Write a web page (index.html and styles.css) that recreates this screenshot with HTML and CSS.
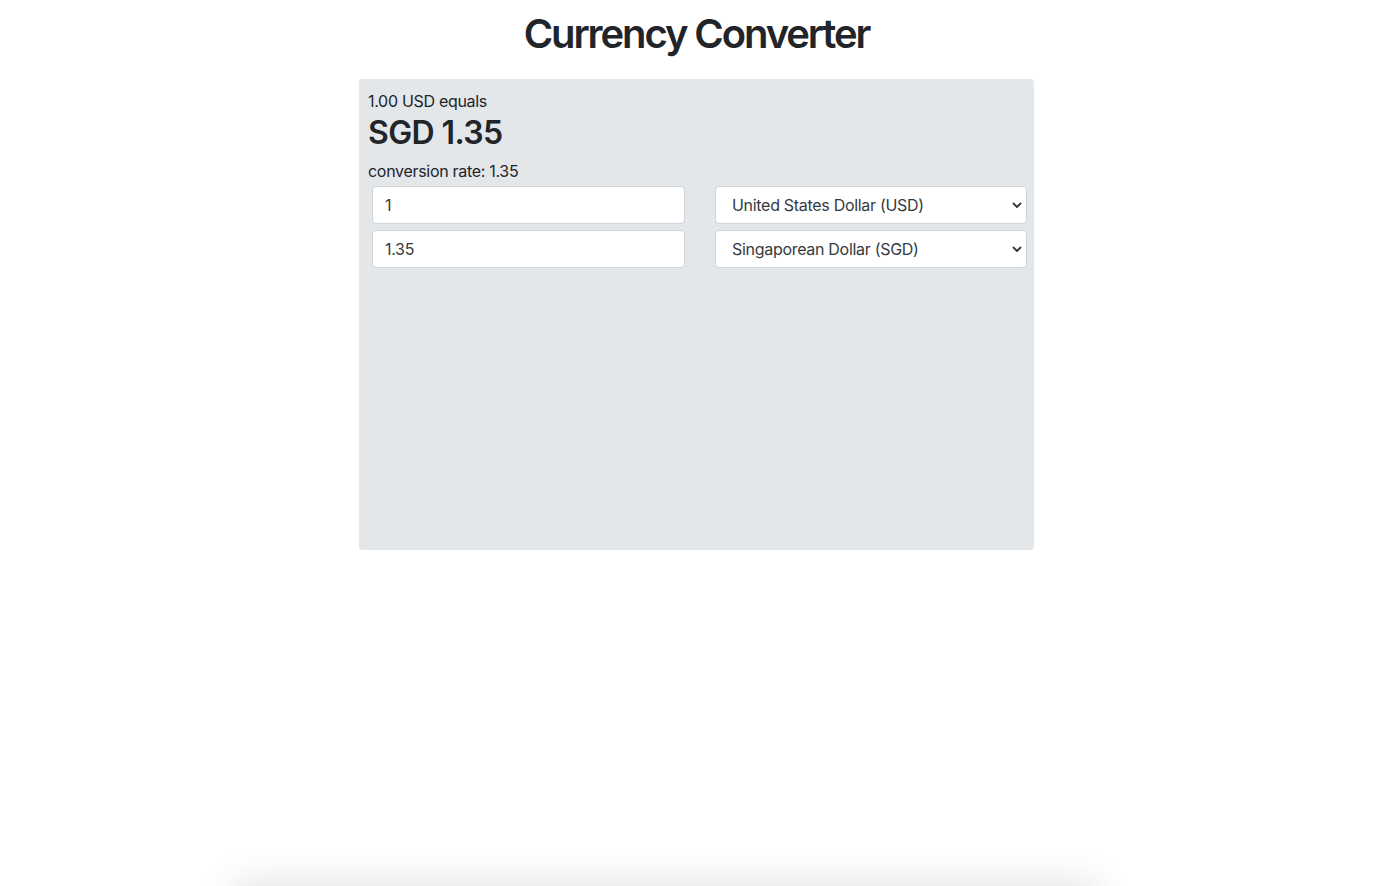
FILE: index.html
```html
<!DOCTYPE html>
<html lang="en">
<head>
<meta charset="utf-8">
<title>Currency Converter</title>
<link rel="stylesheet" href="styles.css">
</head>
<body>
<main class="page">
  <h1 class="title">Currency Converter</h1>
  <section class="panel">
    <div class="summary">
      <p class="equals">1.00 USD equals</p>
      <h2 class="result">SGD 1.35</h2>
      <p class="rate">conversion rate: 1.35</p>
    </div>
    <form class="grid">
      <input class="field" type="text" value="1">
      <select class="field select">
        <option>United States Dollar (USD)</option>
      </select>
      <input class="field" type="text" value="1.35">
      <select class="field select">
        <option>Singaporean Dollar (SGD)</option>
      </select>
    </form>
  </section>
</main>
<div class="dock"></div>
</body>
</html>
```

FILE: styles.css
```css
html, body {
  margin: 0;
  padding: 0;
  background: #fff;
}
body {
  font-family: Inter, "Liberation Sans", sans-serif;
  color: #212529;
  overflow: hidden;
  height: 886px;
}
.page {
  display: flex;
  flex-direction: column;
  align-items: center;
  padding: 10px 5px 0 0;
}
.title {
  margin: 0 0 21px;
  font-size: 40px;
  line-height: 48px;
  font-weight: 600;
  letter-spacing: -2.1px;
}
.panel {
  box-sizing: border-box;
  width: 675px;
  height: 471px;
  background: #e4e7ea;
  border-radius: 4px;
  padding-top: 10px;
}
.summary {
  padding-left: 9px;
  letter-spacing: -0.3px;
}
.equals {
  margin: 0;
  font-size: 16px;
  line-height: 24px;
}
.result {
  margin: 1px 0 0;
  font-size: 32px;
  line-height: 38px;
  font-weight: 600;
  letter-spacing: -0.6px;
}
.rate {
  margin: 7px 0 0;
  font-size: 16px;
  line-height: 24px;
}
.grid {
  display: grid;
  grid-template-columns: 313px 312px;
  column-gap: 30px;
  row-gap: 6px;
  padding: 3px 0 0 13px;
}
.field {
  box-sizing: border-box;
  height: 38px;
  margin: 0;
  border: 1px solid #ced4da;
  border-radius: 4px;
  background: #fff;
  font-family: Inter, "Liberation Sans", sans-serif;
  font-size: 16px;
  letter-spacing: -0.3px;
  color: #343a40;
  padding: 6px 12px;
  outline: none;
}
.select {
  -webkit-appearance: none;
  appearance: none;
  padding-left: 16px;
  color: #343a40;
  background-image: url("data:image/svg+xml;utf8,<svg xmlns='http://www.w3.org/2000/svg' width='10' height='7' viewBox='0 0 10 7'><path d='M1.5 1.5 L5 5 L8.5 1.5' fill='none' stroke='%23343a40' stroke-width='1.8' stroke-linecap='round' stroke-linejoin='round'/></svg>");
  background-repeat: no-repeat;
  background-position: right 4px center;
  background-size: 10px 7px;
}
.dock {
  position: fixed;
  left: 240px;
  width: 850px;
  top: 892px;
  height: 60px;
  background: #fff;
  box-shadow: 0 0 40px 6px rgba(0, 0, 0, 0.14);
}
```
